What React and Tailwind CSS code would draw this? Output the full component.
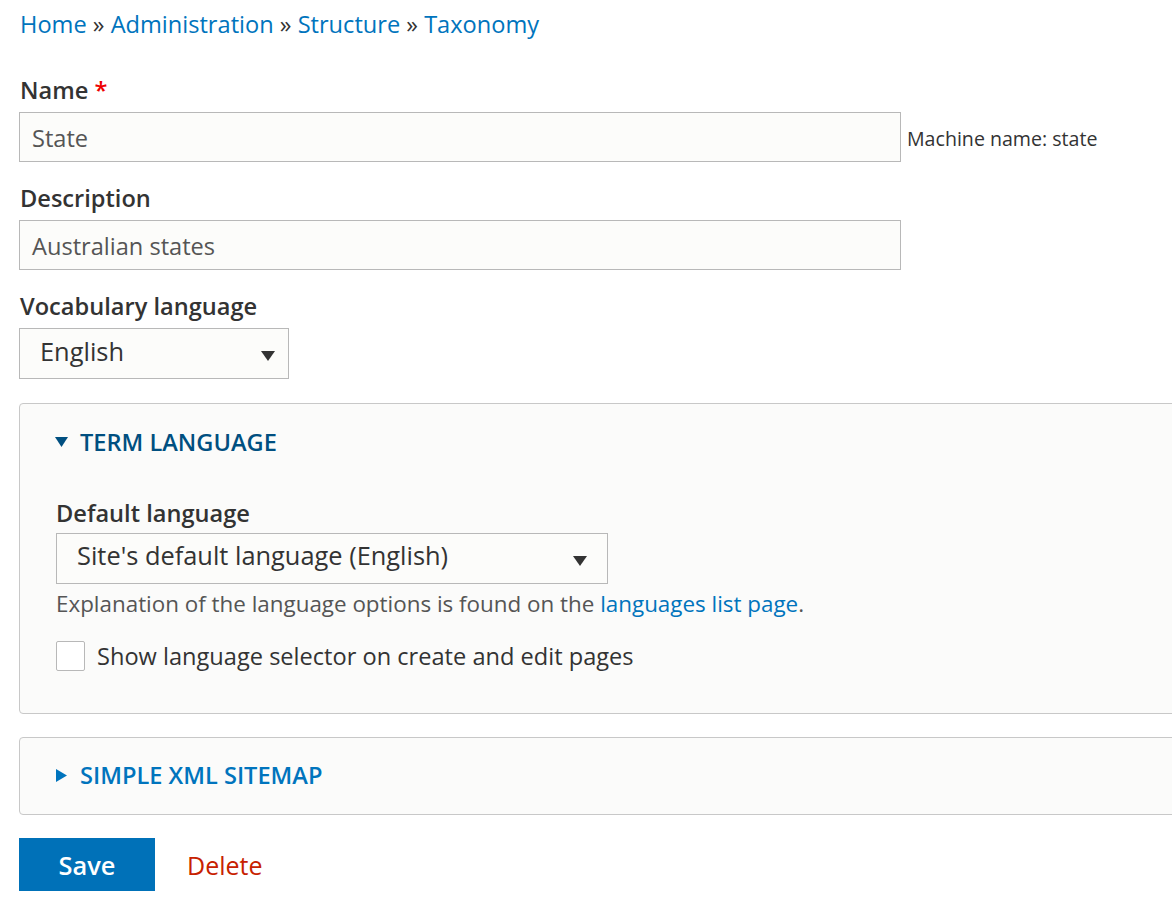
import React from "react";

const Down = ({ className }) => (
  <svg className={className} viewBox="0 0 14 10" width="14" height="10">
    <polygon points="0,0 14,0 7,10" fill="currentColor" />
  </svg>
);

export default function App() {
  return (
    <div
      className="w-[1172px] min-h-[912px] overflow-hidden bg-white text-[#333] pl-[19px]"
      style={{ fontFamily: '"Open Sans", "Noto Sans", sans-serif' }}
    >
      <div className="pt-[9px] pl-px text-[23.6px] leading-[30px] whitespace-nowrap">
        <a className="text-[#0074bd]">Home</a> » <a className="text-[#0074bd]">Administration</a> »{" "}
        <a className="text-[#0074bd]">Structure</a> » <a className="text-[#0074bd]">Taxonomy</a>
      </div>

      <div className="mt-[36px] text-[23.6px] leading-[30px] font-semibold pl-px">
        Name <span className="text-[#e00]">*</span>
      </div>
      <div className="mt-[7px] flex items-center">
        <div className="w-[882px] h-[50px] border border-[#b8b8b8] bg-[#fcfcfa] flex items-center pl-[12px] text-[23.6px] leading-[30px] text-[#555]">
          <span className="mt-[1px]">State</span>
        </div>
        <span className="ml-[6px] mt-[4px] text-[19.6px] leading-[26px] text-[#333]">Machine name: state</span>
      </div>

      <div className="mt-[21px] text-[23.6px] leading-[30px] font-semibold pl-px">Description</div>
      <div className="mt-[7px] w-[882px] h-[50px] border border-[#b8b8b8] bg-[#fcfcfa] flex items-center pl-[12px] text-[23.6px] leading-[30px] text-[#555]">
        <span className="mt-[1px]">Australian states</span>
      </div>

      <div className="mt-[21px] text-[23.6px] leading-[30px] font-semibold pl-px">Vocabulary language</div>
      <div className="mt-[7px] w-[270px] h-[51px] border border-[#b8b8b8] bg-[#fcfcfa] flex items-center justify-between pl-[20px] pr-[13px] text-[25.4px] leading-[32px] text-[#333]">
        <span className="-mt-[6px]">English</span>
        <Down className="text-[#333] mt-[4px]" />
      </div>

      <div className="mt-[24px] w-[1170px] border border-[#c8c8c8] rounded-[4px] bg-[#fbfbfa] pl-[35px] pt-[23px] pb-[42px]">
        <div className="flex items-center h-[30px] text-[23.6px] leading-[30px] font-semibold text-[#004f80]">
          <svg viewBox="0 0 13 10" width="13" height="10" className="mr-[12px]">
            <polygon points="0,0 13,0 6.5,10" fill="currentColor" />
          </svg>
          TERM LANGUAGE
        </div>
        <div className="mt-[41px] pl-px text-[23.6px] leading-[30px] font-semibold">Default language</div>
        <div className="mt-[5px] ml-px w-[552px] h-[51px] border border-[#b8b8b8] bg-[#fcfcfa] flex items-center justify-between pl-[20px] pr-[20px] text-[25.4px] leading-[32px] text-[#333]">
          <span className="-mt-[8px]">Site's default language (English)</span>
          <Down className="text-[#333] mt-[4px]" />
        </div>
        <div className="mt-[7px] pl-px text-[22.4px] leading-[26px] text-[#555]">
          Explanation of the language options is found on the{" "}
          <a className="text-[#0074bd]">languages list page</a>.
        </div>
        <div className="mt-[24px] ml-px flex items-center h-[30px]">
          <div className="w-[29px] h-[30px] border border-[#b8b8b8] bg-white rounded-[2px]" />
          <span className="ml-[12px] text-[23.6px] leading-[30px] text-[#333]">Show language selector on create and edit pages</span>
        </div>
      </div>

      <div className="mt-[23px] w-[1170px] border border-[#c8c8c8] rounded-[4px] bg-[#fbfbfa] pl-[36px] pt-[22px] pb-[24px]">
        <div className="flex items-center h-[30px] text-[23.6px] leading-[30px] font-semibold text-[#0074bd]">
          <svg viewBox="0 0 11 13" width="11" height="13" className="mr-[13px]">
            <polygon points="0,0 11,6.5 0,13" fill="currentColor" />
          </svg>
          SIMPLE XML SITEMAP
        </div>
      </div>

      <div className="mt-[23px] flex items-center">
        <button className="w-[136px] h-[53px] bg-[#0071b8] text-white text-[25.4px] leading-[32px] font-semibold">Save</button>
        <a className="ml-[32px] text-[25px] leading-[32px] text-[#c72100]">Delete</a>
      </div>
    </div>
  );
}
